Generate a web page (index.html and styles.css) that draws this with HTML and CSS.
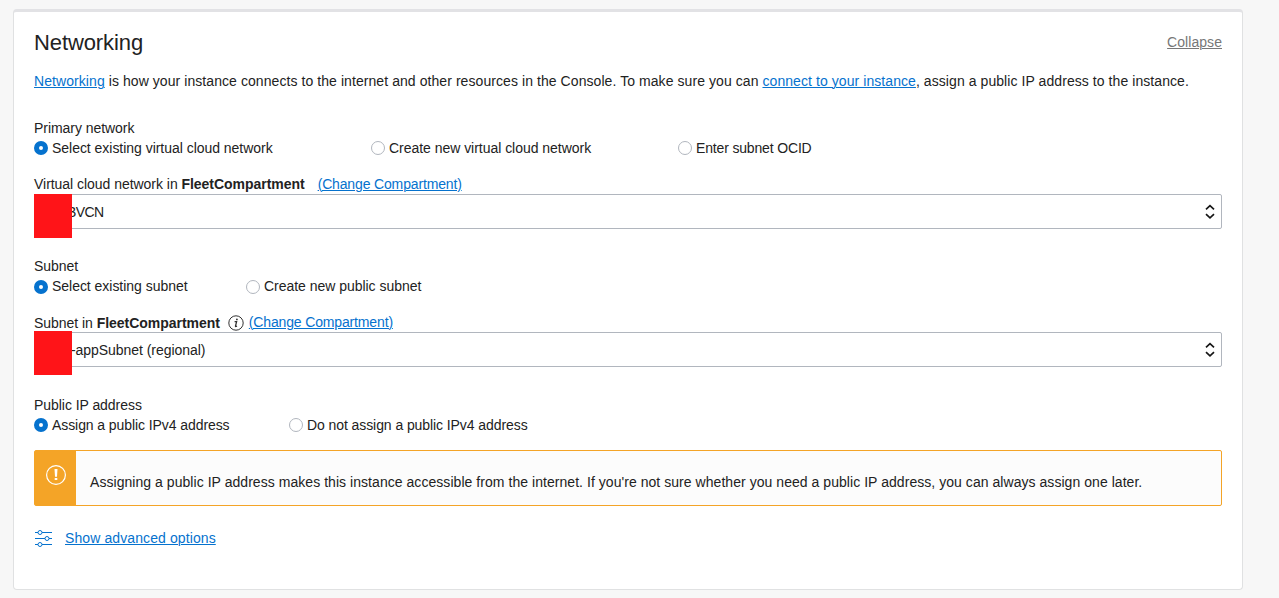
FILE: index.html
```html
<!DOCTYPE html>
<html lang="en">
<head>
<meta charset="utf-8">
<title>Networking</title>
<link rel="stylesheet" href="styles.css">
</head>
<body>
<main class="card">
  <header class="card-header">
    <h1 class="title">Networking</h1>
    <a class="collapse" href="#">Collapse</a>
  </header>
  <p class="intro"><a href="#">Networking</a> is how your instance connects to the internet and other resources in the Console. To make sure you can <a href="#">connect to your instance</a>, assign a public IP address to the instance.</p>

  <section class="group">
    <div class="label">Primary network</div>
    <div class="radios radios-network">
      <label class="radio"><span class="dot dot-on"></span><span>Select existing virtual cloud network</span></label>
      <label class="radio"><span class="dot"></span><span>Create new virtual cloud network</span></label>
      <label class="radio"><span class="dot"></span><span class="ocid">Enter subnet OCID</span></label>
    </div>
    <div class="field-label"><span>Virtual cloud network in <b>FleetCompartment</b></span><a class="change change-vcn" href="#">(Change Compartment)</a></div>
    <div class="select">
      <span class="value value-vcn">BVCN</span>
      <svg class="arrows" width="10" height="16" viewBox="0 0 10 16"><path d="M1 5.3 5 1.7 9 5.3M1 10.2 5 13.8 9 10.2"/></svg>
      <span class="redaction"></span>
    </div>
  </section>

  <section class="group group-subnet">
    <div class="label">Subnet</div>
    <div class="radios radios-subnet">
      <label class="radio"><span class="dot dot-on"></span><span>Select existing subnet</span></label>
      <label class="radio"><span class="dot"></span><span>Create new public subnet</span></label>
    </div>
    <div class="field-label"><span class="subnet-name">Subnet in <b>FleetCompartment</b></span><svg class="info" width="16" height="16" viewBox="0 0 16 16"><circle cx="8" cy="8" r="7.2"/><path class="info-stem" d="M6.6 6.6H8.6L7.5 11.2Q7.5 11.8 9 11.1"/><circle class="info-dot" cx="8.9" cy="4.4" r=".9"/></svg><a class="change" href="#">(Change Compartment)</a></div>
    <div class="select">
      <span class="value value-subnet">-appSubnet (regional)</span>
      <svg class="arrows" width="10" height="16" viewBox="0 0 10 16"><path d="M1 5.3 5 1.7 9 5.3M1 10.2 5 13.8 9 10.2"/></svg>
      <span class="redaction redaction-subnet"></span>
    </div>
  </section>

  <section class="group group-ip">
    <div class="label">Public IP address</div>
    <div class="radios radios-ip">
      <label class="radio"><span class="dot dot-on"></span><span>Assign a public IPv4 address</span></label>
      <label class="radio"><span class="dot"></span><span>Do not assign a public IPv4 address</span></label>
    </div>
  </section>

  <div class="alert">
    <div class="alert-icon"><svg width="20" height="20" viewBox="0 0 20 20"><circle cx="10" cy="10" r="9.4"/><path d="M8.5 4H11.5L11 11.8H9ZM8.7 13H11.3V15H8.7Z"/></svg></div>
    <p class="alert-text">Assigning a public IP address makes this instance accessible from the internet. If you're not sure whether you need a public IP address, you can always assign one later.</p>
  </div>

  <div class="advanced">
    <svg width="18" height="18" viewBox="0 0 18 18"><path d="M1 3.5H4M8 3.5H18M1 9.5H11M15 9.5H18M1 15.5H4M8 15.5H18"/><circle cx="6" cy="3.5" r="2"/><circle cx="13" cy="9.5" r="2"/><circle cx="6" cy="15.5" r="2"/></svg>
    <a href="#">Show advanced options</a>
  </div>
</main>
</body>
</html>
```
FILE: styles.css
```css
* { box-sizing: border-box; }
body {
  margin: 0;
  height: 598px;
  padding: 9px 36px 8px 13px;
  overflow: hidden;
  background: #f7f7f7;
  color: #222;
  font: 14px/20px "Liberation Sans", Arial, sans-serif;
  white-space: nowrap;
}
.card {
  height: 581px;
  padding: 16px 20px 0;
  background: #fff;
  border: 1px solid #e0e1e2;
  border-top: 3px solid #e2e2e5;
  border-radius: 4px;
}
a {
  color: #0572ce;
  text-underline-offset: 1px;
  text-decoration-thickness: 1px;
}
.card-header { display: flex; justify-content: space-between; height: 30px; }
.title { margin: 0; font-size: 22px; font-weight: 400; line-height: 30px; letter-spacing: -.1px; }
.collapse { color: #777; line-height: 28px; letter-spacing: .05px; }
.intro { margin: 13px 0 27px; letter-spacing: .071px; }
.label { height: 20px; letter-spacing: -.05px; }
.radios { display: grid; height: 20px; letter-spacing: -.03px; }
.radios-network { grid-template-columns: 337px 307px 1fr; }
.radios-subnet { grid-template-columns: 212px 1fr; }
.radios-subnet .dot { position: relative; top: 1px; }
.radios-ip { grid-template-columns: 255px 1fr; letter-spacing: -.08px; }
.radio { display: flex; align-items: center; gap: 4px; }
.ocid { letter-spacing: -.16px; }
.dot { width: 14px; height: 14px; border: 1px solid #b1b6be; border-radius: 50%; background: #fff; }
.dot-on { border: 5px solid #0572ce; }
.field-label { display: flex; align-items: center; height: 20px; margin-top: 16px; letter-spacing: -.035px; }
.change { letter-spacing: -.15px; }
.change-vcn { margin-left: 13px; }
.select {
  position: relative;
  display: flex;
  align-items: center;
  justify-content: space-between;
  height: 35px;
  padding: 0 6px 0 32px;
  border: 1px solid #b1b6be;
  border-radius: 2px;
}
.value-vcn { letter-spacing: -.6px; }
.value-subnet { margin-left: 4px; letter-spacing: -.05px; }
.arrows { fill: none; stroke: #161616; stroke-width: 1.7; }
.redaction { position: absolute; left: -1px; top: -1px; width: 38px; height: 44px; background: #ff1418; }
.redaction-subnet { top: -2px; }
.group-subnet { margin-top: 27px; }
.subnet-name { margin-top: 2px; }
.info { margin: 2px 5px 0 8px; fill: none; stroke: #333; stroke-width: 1; }
.info-stem { stroke-width: 1.3; }
.info-dot { fill: #333; stroke: none; }
.group-ip { margin-top: 28px; }
.alert {
  display: flex;
  height: 56px;
  margin-top: 15px;
  border: 1px solid #f4a427;
  border-radius: 2px;
  background: #fcfcfc;
}
.alert-icon { width: 41px; padding: 14px 0 0 11px; background: #f4a427; }
.alert-icon svg { display: block; fill: #fff; }
.alert-icon circle { fill: none; stroke: #fff; stroke-width: 1.2; }
.alert-text { margin: 21px 0 0 14px; letter-spacing: .048px; }
.advanced { display: flex; align-items: center; gap: 13px; margin-top: 22px; letter-spacing: .1px; }
.advanced svg { fill: none; stroke: #0572ce; stroke-width: 1; }
```
